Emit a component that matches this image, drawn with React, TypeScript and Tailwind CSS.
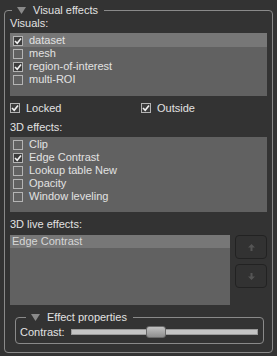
import type { ReactNode } from 'react'

const font = { fontFamily: '"Liberation Sans", Arial, sans-serif' }

function Triangle() {
  return (
    <svg width="9" height="7" viewBox="0 0 9 7" className="shrink-0">
      <path d="M0 0 L9 0 L4.5 7 Z" fill="#8a8a8a" />
    </svg>
  )
}

function Check({ checked, dark }: { checked?: boolean; dark?: boolean }) {
  return (
    <span
      className={`w-[10px] h-[10px] shrink-0 border border-[#b4b4b4] flex items-center justify-center ${
        checked || dark ? 'bg-[#3c3c3c]' : 'bg-transparent'
      }`}
    >
      {checked && (
        <svg width="8" height="8" viewBox="0 0 8 8">
          <path d="M1 4 L3.2 6.3 L7 1.5" stroke="#f2f2f2" strokeWidth="1.6" fill="none" />
        </svg>
      )}
    </span>
  )
}

function Row({ label, checked, active }: { label: string; checked?: boolean; active?: boolean }) {
  return (
    <div
      className={`h-[13px] flex items-center gap-[6px] pl-[3px] leading-[13px] ${
        active ? 'bg-[#777777]' : ''
      }`}
    >
      <Check checked={checked} />
      <span className="text-[#e2e2e2]">{label}</span>
    </div>
  )
}

function Label({ children }: { children: ReactNode }) {
  return <div className="h-[12px] leading-[12px] text-[#e2e2e2]">{children}</div>
}

function ArrowButton({ up }: { up?: boolean }) {
  return (
    <div className="w-[32px] h-[24px] rounded-[4px] border border-[#222222] bg-[#323232] flex items-center justify-center">
      <svg width="7" height="7" viewBox="0 0 7 7">
        {up ? (
          <path d="M3.5 0 L7 3.5 L4.5 3.5 L4.5 7 L2.5 7 L2.5 3.5 L0 3.5 Z" fill="#555555" />
        ) : (
          <path d="M3.5 7 L7 3.5 L4.5 3.5 L4.5 0 L2.5 0 L2.5 3.5 L0 3.5 Z" fill="#555555" />
        )}
      </svg>
    </div>
  )
}

export default function App() {
  return (
    <div className="w-[277px] h-[356px] bg-[#333333] text-[11px] pt-[3px] pl-[4px] overflow-hidden" style={font}>
      <fieldset className="w-[269px] h-[350px] border border-[#8a8a8a] rounded-[4px] px-[5px] pb-[7px]">
        <legend className="ml-[2px] px-[5px] h-[14px] flex items-center gap-[7px]">
          <Triangle />
          <span className="text-[#e2e2e2] pr-[1px]">Visual effects</span>
        </legend>

        <Label>Visuals:</Label>
        <div className="mt-[4px] h-[63px] bg-[#616161]">
          <div className="bg-[#777777] h-[1px]" />
          <Row label="dataset" checked active />
          <Row label="mesh" />
          <Row label="region-of-interest" checked />
          <Row label="multi-ROI" />
        </div>

        <div className="mt-[5px] h-[14px] flex items-center">
          <div className="w-[131px] flex items-center gap-[6px]">
            <Check checked dark />
            <span className="text-[#e2e2e2]">Locked</span>
          </div>
          <div className="flex items-center gap-[6px]">
            <Check checked dark />
            <span className="text-[#e2e2e2]">Outside</span>
          </div>
        </div>

        <div className="mt-[6px]">
          <Label>3D effects:</Label>
        </div>
        <div className="mt-[4px] h-[75px] bg-[#616161] pt-[1px]">
          <Row label="Clip" />
          <Row label="Edge Contrast" checked />
          <Row label="Lookup table New" />
          <Row label="Opacity" />
          <Row label="Window leveling" />
        </div>

        <div className="mt-[6px]">
          <Label>3D live effects:</Label>
        </div>
        <div className="mt-[5px] flex gap-[5px]">
          <div className="w-[220px] h-[70px] bg-[#616161]">
            <div className="h-[13px] bg-[#777777] pl-[2px] leading-[13px] text-[#d6d6d6]">Edge Contrast</div>
          </div>
          <div className="flex flex-col gap-[5px]">
            <ArrowButton up />
            <ArrowButton />
          </div>
        </div>

        <fieldset className="mt-[5px] ml-[5px] mr-[3px] border border-[#8a8a8a] rounded-[4px] pl-[4px] pr-[5px] pt-[2px] pb-[5px]">
          <legend className="ml-[6px] px-[5px] h-[14px] flex items-center gap-[7px]">
            <Triangle />
            <span className="text-[#e2e2e2] pr-[1px]">Effect properties</span>
          </legend>
          <div className="h-[12px] flex items-center">
            <span className="w-[51px] text-[#e2e2e2] leading-[12px]">Contrast:</span>
            <div className="flex-1 relative h-[12px] flex items-center">
              <div className="w-full h-[6px] bg-[#c4c4c4] border border-[#9a9a9a]" />
              <div className="absolute left-[75px] top-0 w-[20px] h-[12px] rounded-[3px] border border-[#6a6a6a] bg-gradient-to-b from-[#c2c2c2] to-[#8e8e8e]" />
            </div>
          </div>
        </fieldset>
      </fieldset>
    </div>
  )
}
